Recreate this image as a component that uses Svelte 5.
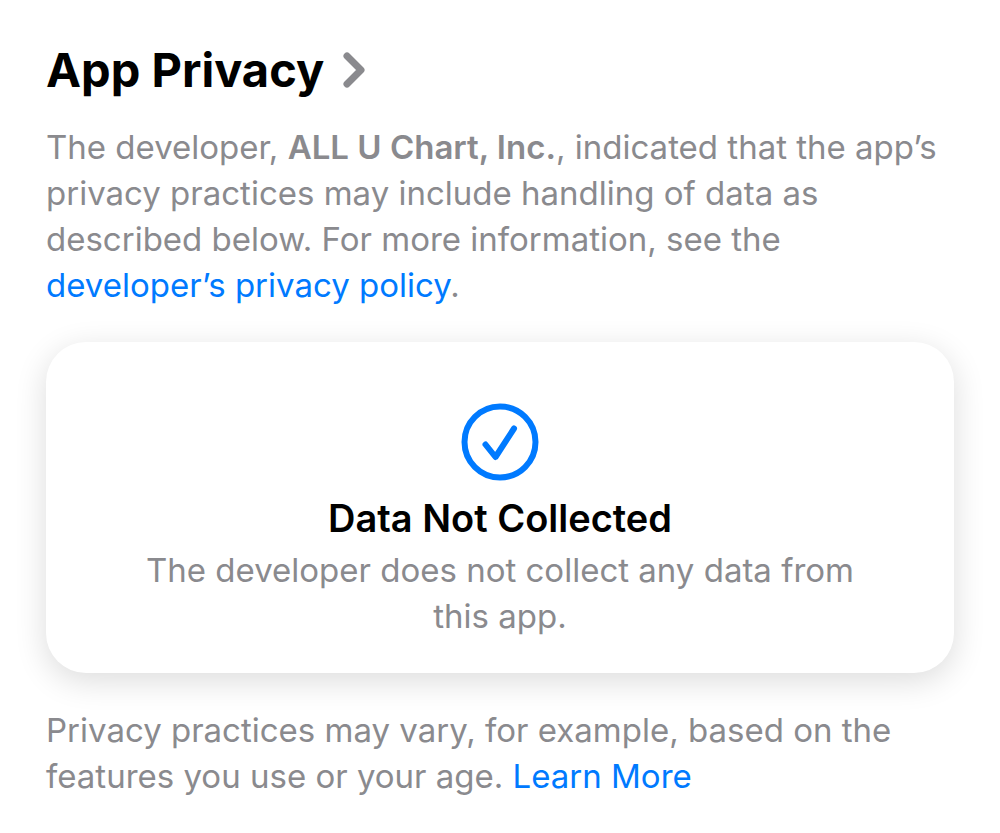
<script>
  const developer = "ALL U Chart, Inc.";
</script>

<main>
  <h1>
    <a class="title" href="#details">
      App Privacy
      <svg class="chevron" viewBox="0 0 24 38" aria-hidden="true">
        <path d="M5 5 L19 19 L5 33" />
      </svg>
    </a>
  </h1>

  <p class="intro">
    The developer, <strong>{developer}</strong>, indicated that the app’s
    privacy practices may include handling of data as described below. For more
    information, see the <a href="#policy">developer’s privacy policy</a>.
  </p>

  <section class="card">
    <svg class="check" viewBox="0 0 78 78" aria-hidden="true">
      <circle cx="39" cy="39" r="35.5" />
      <path d="M24.5 41.5 L34.5 54 L53 25.5" />
    </svg>
    <h2>Data Not Collected</h2>
    <p>The developer does not collect any data from this app.</p>
  </section>

  <p class="note">
    Privacy practices may vary, for example, based on the features you use or
    your age. <a href="#learn-more">Learn More</a>
  </p>
</main>

<style>
  :global(body) {
    background: #fff;
  }

  main {
    padding: 40px 46px 32px;
    font-family: Inter, "Liberation Sans", sans-serif;
    font-size: 33px;
    line-height: 46px;
    color: #8a8a8e;
  }

  h1,
  h2,
  p {
    margin: 0;
  }

  h1 {
    font-size: 47px;
    line-height: 60px;
    font-weight: 700;
  }

  a {
    color: #007aff;
    text-decoration: none;
  }

  .title {
    display: inline-flex;
    align-items: center;
    gap: 18px;
    color: #000;
  }

  .chevron {
    width: 24px;
    height: 38px;
    fill: none;
    stroke: #8a8a8e;
    stroke-width: 7;
    stroke-linecap: round;
    stroke-linejoin: round;
  }

  .intro {
    margin-top: 24px;
  }

  strong {
    font-weight: 600;
  }

  .card {
    display: flex;
    flex-direction: column;
    align-items: center;
    margin-top: 34px;
    padding: 61px 96px 34px;
    border-radius: 40px;
    background: #fff;
    box-shadow: 0 8px 32px rgba(0, 0, 0, 0.14);
    text-align: center;
  }

  .check {
    width: 78px;
    height: 78px;
    fill: none;
    stroke: #007aff;
    stroke-width: 6;
    stroke-linecap: round;
    stroke-linejoin: round;
  }

  h2 {
    margin: 12px 0 4px;
    font-size: 38px;
    line-height: 50px;
    font-weight: 600;
    color: #000;
  }

  .note {
    margin-top: 34px;
  }
</style>
